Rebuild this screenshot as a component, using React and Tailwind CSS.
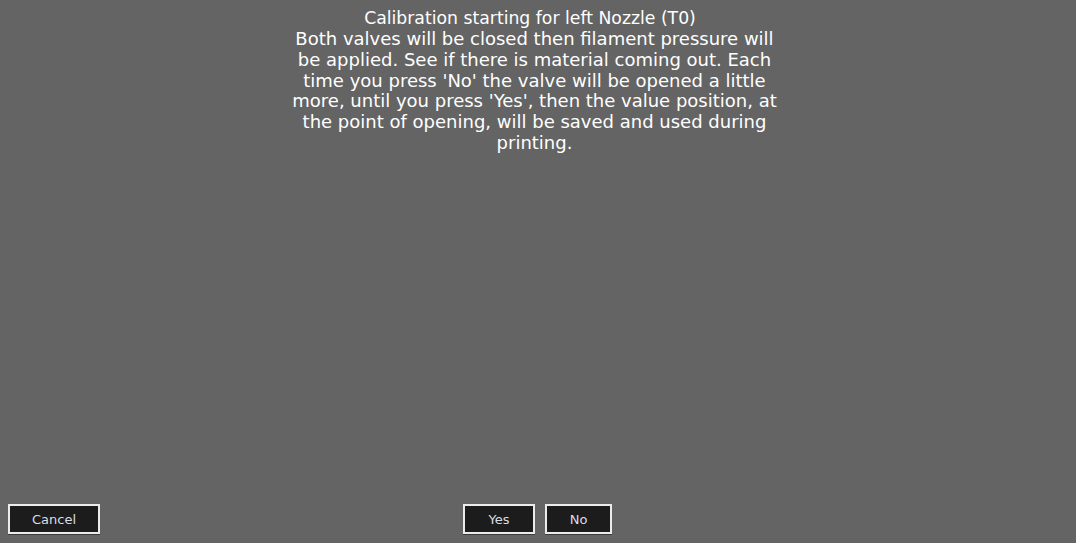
export default function App() {
  const lines = [
    "Both valves will be closed then filament pressure will",
    "be applied. See if there is material coming out. Each",
    "time you press 'No' the valve will be opened a little",
    "more, until you press 'Yes', then the value position, at",
    "the point of opening, will be saved and used during",
    "printing.",
  ];
  const btn =
    "h-[30px] pt-[1px] border-2 border-[#ececec] bg-[#1c1c1c] text-[#d8dde6] text-[13px] flex items-center justify-center shadow-[0_1px_0_#3a3a3a]";
  return (
    <div
      className="w-[1076px] h-[543px] bg-[#646464] flex flex-col overflow-hidden"
      style={{ fontFamily: '"DejaVu Sans", sans-serif' }}
    >
      <div className="flex flex-col items-center pt-[8px] pr-[7px] text-white text-[18px] leading-[20.85px] whitespace-nowrap">
        <div className="text-[17.25px] mr-[9px]">Calibration starting for left Nozzle (T0)</div>
        {lines.map((l, i) => (
          <div key={i}>{l}</div>
        ))}
      </div>
      <div className="flex-1" />
      <div className="relative h-[30px] mb-[9px]">
        <div className="absolute left-[8px] top-0">
          <button className={btn + " w-[92px]"}>Cancel</button>
        </div>
        <div className="absolute left-[463px] top-0 flex gap-[10px]">
          <button className={btn + " w-[72px]"}>Yes</button>
          <button className={btn + " w-[67px]"}>No</button>
        </div>
      </div>
    </div>
  );
}
